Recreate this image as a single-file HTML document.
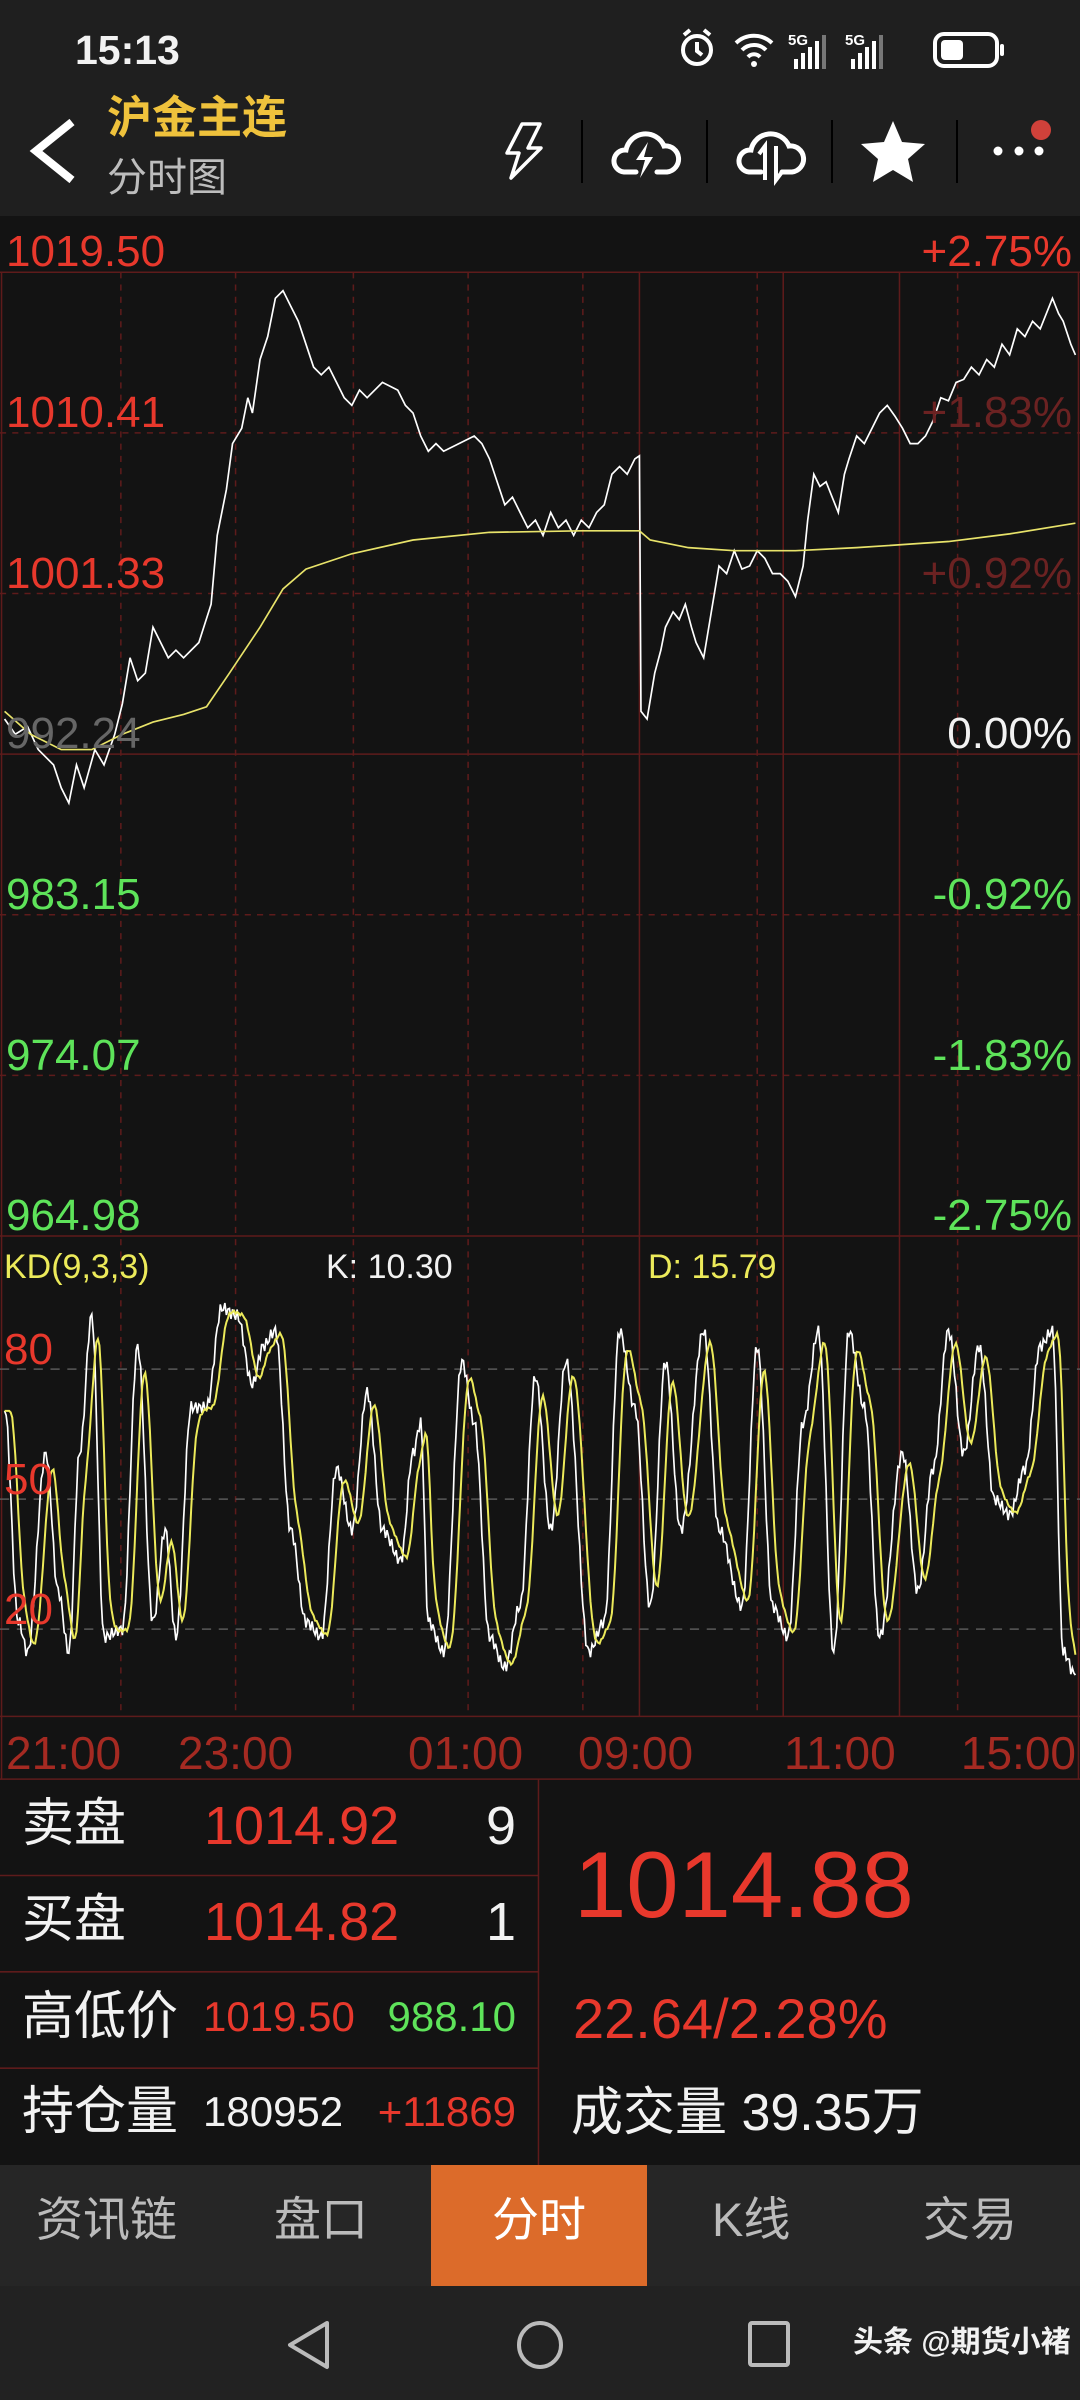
<!DOCTYPE html>
<html><head><meta charset="utf-8">
<style>
*{margin:0;padding:0;box-sizing:border-box}
body{width:1080px;height:2400px;background:#131313;position:relative;overflow:hidden;font-family:"Liberation Sans","Noto Sans CJK SC",sans-serif;}
.a{position:absolute;white-space:nowrap;line-height:1}
.r{color:#e8382c}.g{color:#5ee35a}.w{color:#f2f2f2}
.p{font-size:44px}
</style></head><body>
<div class="a" style="left:0;top:0;width:1080px;height:216px;background:#1f1f1f"></div>
<div class="a w" style="left:75px;top:30px;font-size:41px;font-weight:bold">15:13</div>
<svg class="a" style="left:670px;top:25px" width="345" height="50" viewBox="0 0 345 50">
<g fill="none" stroke="#fff" stroke-width="4">
<circle cx="27" cy="25" r="14"/><path d="M27 17v9l5 4"/><path d="M14 10l6-5M40 10l-6-5"/>
<path d="M66 18a26 26 0 0 1 36 0M72 25a17 17 0 0 1 24 0M78 32a8 8 0 0 1 12 0"/>
</g>
<circle cx="84" cy="39" r="3" fill="#fff"/>
<text x="118" y="20" font-size="15" font-weight="bold" fill="#fff" font-family="Liberation Sans">5G</text>
<g fill="#fff"><rect x="124" y="34" width="4" height="10"/><rect x="131" y="28" width="4" height="16"/><rect x="138" y="22" width="4" height="22"/><rect x="145" y="16" width="4" height="28"/><rect x="152" y="10" width="4" height="34" fill="#777"/></g>
<text x="175" y="20" font-size="15" font-weight="bold" fill="#fff" font-family="Liberation Sans">5G</text>
<g fill="#fff"><rect x="181" y="34" width="4" height="10"/><rect x="188" y="28" width="4" height="16"/><rect x="195" y="22" width="4" height="22"/><rect x="202" y="16" width="4" height="28"/><rect x="209" y="10" width="4" height="34" fill="#777"/></g>
<rect x="265" y="9" width="62" height="32" rx="9" fill="none" stroke="#fff" stroke-width="4"/>
<rect x="271" y="15" width="22" height="20" rx="4" fill="#fff"/>
<rect x="330" y="19" width="4" height="12" rx="2" fill="#fff"/>
</svg>
<svg class="a" style="left:28px;top:118px" width="50" height="66"><path d="M44 4L8 33l36 29" fill="none" stroke="#fff" stroke-width="8"/></svg>
<div class="a" style="left:107px;top:95px;font-size:45px;font-weight:bold;color:#efc23c">沪金主连</div>
<div class="a" style="left:107px;top:158px;font-size:40px;color:#bdbdbd">分时图</div>
<svg class="a" style="left:490px;top:110px" width="590" height="80" viewBox="490 110 590 80">
<path d="M522 124h18l-12 24h13l-30 30 8-25h-12z" fill="none" stroke="#fff" stroke-width="3.5" stroke-linejoin="round"/>
<g stroke="#000" stroke-width="2"><path d="M582 120v63M707 120v63M832 120v63M957 120v63"/></g>
<g fill="none" stroke="#fff" stroke-width="5" stroke-linecap="round">
<path d="M636 172h-12a11 11 0 0 1 2-22a20 20 0 0 1 38-4a13 13 0 0 1 3 26h-10"/>
<path d="M761 172h-12a11 11 0 0 1 2-22a20 20 0 0 1 38-4a13 13 0 0 1 3 26h-10"/>
</g>
<path d="M648 142l-12 18h9l-5 18 13-21h-9z" fill="#fff"/>
<path d="M765 180v-34l-6 8M776 146v34l6-8" fill="none" stroke="#fff" stroke-width="4"/>
<path d="M893 121l9 21 23 2-17 15 5 23-20-12-20 12 5-23-17-15 23-2z" fill="#fff"/>
<g fill="#fff"><circle cx="998" cy="151" r="4.5"/><circle cx="1019" cy="151" r="4.5"/><circle cx="1039" cy="151" r="4.5"/></g>
<circle cx="1041" cy="130" r="10" fill="#d0413a"/>
</svg>

<svg class="a" style="left:0;top:0" width="1080" height="2400" viewBox="0 0 706 1568.9">
<g stroke="#5e1b1b" stroke-width="1" fill="none">
<path d="M0 178H706M0 493H706M0 808H706M0 1122H706M0 1163H706M1 178V1163M705 178V1163M352 1163V1416M0 1226H352M0 1289H352M0 1352H352"/>
<path d="M0 283H706M0 388H706M0 598H706M0 703H706" stroke-dasharray="4 4"/>
<path d="M79 178V1122M154 178V1122M231 178V1122M306 178V1122M381 178V1122M495 178V1122M626 178V1122" stroke-dasharray="4 4"/>
<path d="M418 178V1122M512 178V1122M588 178V1122"/>
</g>
<g stroke="#5a5a5a" stroke-width="1" stroke-dasharray="6 5"><path d="M0 895H706M0 980H706M0 1065H706"/></g>
<polyline fill="none" stroke="#fff" stroke-width="1.1" points="3,470 10,480 18,475 25,490 35,500 40,515 45,525 50,500 55,515 62,490 68,500 75,480 80,460 85,430 90,445 95,440 100,410 105,420 110,430 115,425 120,430 130,420 138,395 142,350 148,320 152,290 158,280 162,260 165,270 170,235 175,220 180,195 185,190 190,200 195,210 200,225 205,240 210,245 215,240 220,250 225,260 230,265 235,255 240,260 250,250 260,255 265,265 270,270 275,285 280,295 285,290 290,295 300,290 310,285 315,290 320,300 325,315 330,330 335,325 340,335 345,345 350,340 355,350 360,335 365,345 370,340 375,350 380,340 385,345 390,335 395,330 400,310 405,305 410,310 415,300 418,298 419,465 423,470 428,440 432,425 435,410 440,400 444,405 448,395 452,410 455,420 460,430 465,400 470,370 475,375 480,360 485,372 490,370 495,360 500,365 505,375 510,375 515,380 520,390 525,370 528,340 532,310 536,318 540,315 544,325 548,335 552,310 555,300 560,285 565,290 570,280 575,270 580,265 585,272 590,280 595,290 600,290 605,285 610,275 615,260 620,262 625,250 630,248 635,240 640,245 645,235 650,240 655,225 660,232 665,215 670,220 675,210 680,215 684,205 688,195 692,205 695,210 700,225 703,232"/>
<polyline fill="none" stroke="#e8e36a" stroke-width="1.1" points="3,465 20,480 40,490 60,490 80,480 100,472 120,467 135,462 150,440 170,410 185,385 200,372 230,362 270,353 320,348 380,347 418,347 425,353 450,358 480,360 520,360 560,358 620,354 660,349 703,342"/>
<path id="kw" fill="none" stroke="#fff" stroke-width="1.1"/>
<path id="kd" fill="none" stroke="#ecea5a" stroke-width="1.3"/>
</svg>
<script>
var P=[[3,920],[12,1060],[18,1080],[30,950],[38,1040],[45,1080],[52,950],[60,860],[68,1070],[80,1065],[90,880],[100,1060],[108,1000],[115,1070],[125,920],[135,920],[145,855],[155,860],[165,905],[172,880],[180,870],[190,1000],[200,1060],[210,1070],[220,960],[230,1000],[240,910],[250,1000],[262,1020],[270,950],[275,930],[280,1060],[290,1080],[302,890],[310,930],[320,1070],[330,1090],[340,1050],[350,900],[360,1000],[370,890],[385,1080],[395,1060],[405,870],[415,920],[425,1050],[435,890],[445,1000],[460,870],[470,1000],[485,1050],[495,880],[505,1050],[515,1070],[525,930],[535,870],[545,1080],[555,870],[565,920],[575,1070],[590,950],[600,1040],[610,960],[620,870],[630,950],[640,880],[650,980],[660,990],[670,960],[680,880],[688,870],[695,1080],[703,1095]];
var pts=[],i,j;
for(i=0;i<P.length-1;i++){var a=P[i],b=P[i+1];for(j=0;j<(b[0]-a[0]);j++){var t=j/(b[0]-a[0]);var s=(1-Math.cos(Math.PI*t))/2;var n=Math.sin((a[0]+j)*2.3)*4;pts.push([a[0]+j,a[1]+(b[1]-a[1])*s+n]);}}
pts.push(P[P.length-1]);
var d="M",e="M",v=pts[0][1];
for(i=0;i<pts.length;i++){d+=pts[i][0]+" "+pts[i][1].toFixed(1)+" ";var k=i>=3?pts[i-3][1]:pts[0][1];v=v+(k-v)*0.35;var y=Math.max(850,Math.min(1100,v));e+=pts[i][0]+" "+y.toFixed(1)+" ";}
document.getElementById("kw").setAttribute("d",d);document.getElementById("kd").setAttribute("d",e);
</script>

<div class="a r p" style="left:6px;top:230px">1019.50</div>
<div class="a r p" style="right:8px;top:230px">+2.75%</div>
<div class="a r p" style="left:6px;top:391px">1010.41</div>
<div class="a p" style="right:8px;top:391px;color:#6b2222">+1.83%</div>
<div class="a r p" style="left:6px;top:552px">1001.33</div>
<div class="a p" style="right:8px;top:552px;color:#6b2222">+0.92%</div>
<div class="a p" style="left:6px;top:712px;color:#666">992.24</div>
<div class="a w p" style="right:8px;top:712px">0.00%</div>
<div class="a g p" style="left:6px;top:873px">983.15</div>
<div class="a g p" style="right:8px;top:873px">-0.92%</div>
<div class="a g p" style="left:6px;top:1034px">974.07</div>
<div class="a g p" style="right:8px;top:1034px">-1.83%</div>
<div class="a g p" style="left:6px;top:1194px">964.98</div>
<div class="a g p" style="right:8px;top:1194px">-2.75%</div>

<div class="a" style="left:4px;top:1250px;font-size:34px;color:#ecea5a">KD(9,3,3)</div>
<div class="a w" style="left:326px;top:1250px;font-size:34px">K: 10.30</div>
<div class="a" style="left:648px;top:1250px;font-size:34px;color:#ecea5a">D: 15.79</div>
<div class="a r" style="left:4px;top:1328px;font-size:44px">80</div>
<div class="a r" style="left:4px;top:1458px;font-size:44px">50</div>
<div class="a r" style="left:4px;top:1588px;font-size:44px">20</div>

<div class="a" style="left:6px;top:1730px;font-size:46px;color:#a52a22">21:00</div>
<div class="a" style="left:178px;top:1730px;font-size:46px;color:#a52a22">23:00</div>
<div class="a" style="left:408px;top:1730px;font-size:46px;color:#a52a22">01:00</div>
<div class="a" style="left:578px;top:1730px;font-size:46px;color:#a52a22">09:00</div>
<div class="a" style="left:784px;top:1730px;font-size:46px;color:#a52a22">11:00</div>
<div class="a" style="right:4px;top:1730px;font-size:46px;color:#a52a22">15:00</div>

<div class="a w" style="left:22px;top:1798px;font-size:52px">卖盘</div>
<div class="a r" style="left:204px;top:1799px;font-size:54px">1014.92</div>
<div class="a w" style="right:564px;top:1799px;font-size:54px">9</div>
<div class="a w" style="left:22px;top:1894px;font-size:52px">买盘</div>
<div class="a r" style="left:204px;top:1895px;font-size:54px">1014.82</div>
<div class="a w" style="right:564px;top:1895px;font-size:54px">1</div>
<div class="a w" style="left:22px;top:1991px;font-size:52px">高低价</div>
<div class="a r" style="left:203px;top:1996px;font-size:42px">1019.50</div>
<div class="a g" style="right:564px;top:1996px;font-size:42px">988.10</div>
<div class="a w" style="left:22px;top:2086px;font-size:52px">持仓量</div>
<div class="a w" style="left:203px;top:2091px;font-size:42px">180952</div>
<div class="a r" style="right:564px;top:2091px;font-size:42px">+11869</div>
<div class="a r" style="left:574px;top:1838px;font-size:94px">1014.88</div>
<div class="a r" style="left:573px;top:1991px;font-size:56px">22.64/2.28%</div>
<div class="a w" style="left:571px;top:2087px;font-size:52px">成交量 39.35万</div>

<div class="a" style="left:0;top:2165px;width:1080px;height:121px;background:#262626"></div>
<div class="a" style="left:431px;top:2165px;width:216px;height:121px;background:#dc6b2a"></div>
<div class="a" style="left:36px;top:2196px;font-size:47px;color:#bbb">资讯链</div>
<div class="a" style="left:274px;top:2196px;font-size:47px;color:#bbb">盘口</div>
<div class="a" style="left:492px;top:2196px;font-size:47px;color:#fff">分时</div>
<div class="a" style="left:712px;top:2196px;font-size:47px;color:#bbb">K线</div>
<div class="a" style="left:923px;top:2196px;font-size:47px;color:#bbb">交易</div>
<div class="a" style="left:0;top:2286px;width:1080px;height:114px;background:#222"></div>
<svg class="a" style="left:280px;top:2315px" width="520" height="60">
<path d="M47 8L10 30l37 22z" fill="none" stroke="#bbb" stroke-width="4" stroke-linejoin="round"/>
<ellipse cx="260" cy="30" rx="21" ry="22" fill="none" stroke="#bbb" stroke-width="4"/>
<rect x="470" y="8" width="38" height="42" rx="2" fill="none" stroke="#bbb" stroke-width="4"/>
</svg>
<div class="a w" style="left:853px;top:2328px;font-size:30px;font-weight:bold">头条 @期货小褚</div>
</body></html>
